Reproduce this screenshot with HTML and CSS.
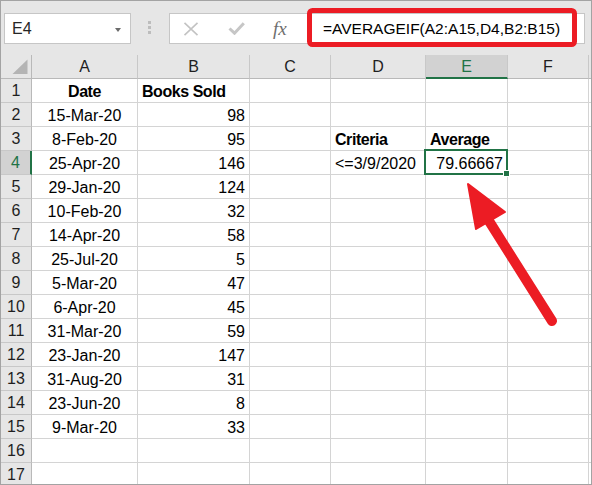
FILE: index.html
```html
<!DOCTYPE html>
<html>
<head>
<meta charset="utf-8">
<link rel="stylesheet" href="styles.css">
</head>
<body>
<div class="frame">
  <div class="toolbar">
    <div class="namebox"><span>E4</span><span class="caret"></span></div>
    <div class="dots"><i></i><i></i><i></i></div>
    <div class="fbox">
      <svg class="ic-x" width="16" height="14" viewBox="0 0 16 14"><path d="M1.5 0.8 L14.5 13.2 M14.5 0.8 L1.5 13.2" stroke="#c3c3c3" stroke-width="1.6" fill="none"/></svg>
      <svg class="ic-ok" width="17" height="13" viewBox="0 0 17 13"><path d="M1.5 6.5 L6.5 11.2 L15.8 1.2" stroke="#c6c6c6" stroke-width="3" fill="none"/></svg>
      <span class="fx">fx</span>
      <span class="formula">=AVERAGEIF(A2:A15,D4,B2:B15)</span>
    </div>
  </div>
  <div class="sheet">
    <div class="ch corner"><svg width="30" height="23" viewBox="0 0 30 23"><polygon points="11.5,19 26.5,19 26.5,4.5" fill="#b4b4b4"/></svg></div>
    <div class="ch">A</div><div class="ch">B</div><div class="ch">C</div><div class="ch">D</div><div class="ch on">E</div><div class="ch">F</div><div class="ch"></div>

    <div class="rh">1</div><div class="c ctr b">Date</div><div class="c b">Books Sold</div><div class="c"></div><div class="c"></div><div class="c"></div><div class="c"></div><div class="c"></div>
    <div class="rh">2</div><div class="c ctr">15-Mar-20</div><div class="c r">98</div><div class="c"></div><div class="c"></div><div class="c"></div><div class="c"></div><div class="c"></div>
    <div class="rh">3</div><div class="c ctr">8-Feb-20</div><div class="c r">95</div><div class="c"></div><div class="c b">Criteria</div><div class="c b">Average</div><div class="c"></div><div class="c"></div>
    <div class="rh on">4</div><div class="c ctr">25-Apr-20</div><div class="c r">146</div><div class="c"></div><div class="c">&lt;=3/9/2020</div><div class="c r sel">79.66667</div><div class="c"></div><div class="c"></div>
    <div class="rh">5</div><div class="c ctr">29-Jan-20</div><div class="c r">124</div><div class="c"></div><div class="c"></div><div class="c"></div><div class="c"></div><div class="c"></div>
    <div class="rh">6</div><div class="c ctr">10-Feb-20</div><div class="c r">32</div><div class="c"></div><div class="c"></div><div class="c"></div><div class="c"></div><div class="c"></div>
    <div class="rh">7</div><div class="c ctr">14-Apr-20</div><div class="c r">58</div><div class="c"></div><div class="c"></div><div class="c"></div><div class="c"></div><div class="c"></div>
    <div class="rh">8</div><div class="c ctr">25-Jul-20</div><div class="c r">5</div><div class="c"></div><div class="c"></div><div class="c"></div><div class="c"></div><div class="c"></div>
    <div class="rh">9</div><div class="c ctr">5-Mar-20</div><div class="c r">47</div><div class="c"></div><div class="c"></div><div class="c"></div><div class="c"></div><div class="c"></div>
    <div class="rh">10</div><div class="c ctr">6-Apr-20</div><div class="c r">45</div><div class="c"></div><div class="c"></div><div class="c"></div><div class="c"></div><div class="c"></div>
    <div class="rh">11</div><div class="c ctr">31-Mar-20</div><div class="c r">59</div><div class="c"></div><div class="c"></div><div class="c"></div><div class="c"></div><div class="c"></div>
    <div class="rh">12</div><div class="c ctr">23-Jan-20</div><div class="c r">147</div><div class="c"></div><div class="c"></div><div class="c"></div><div class="c"></div><div class="c"></div>
    <div class="rh">13</div><div class="c ctr">31-Aug-20</div><div class="c r">31</div><div class="c"></div><div class="c"></div><div class="c"></div><div class="c"></div><div class="c"></div>
    <div class="rh">14</div><div class="c ctr">23-Jun-20</div><div class="c r">8</div><div class="c"></div><div class="c"></div><div class="c"></div><div class="c"></div><div class="c"></div>
    <div class="rh">15</div><div class="c ctr">9-Mar-20</div><div class="c r">33</div><div class="c"></div><div class="c"></div><div class="c"></div><div class="c"></div><div class="c"></div>
    <div class="rh">16</div><div class="c"></div><div class="c"></div><div class="c"></div><div class="c"></div><div class="c"></div><div class="c"></div><div class="c"></div>
    <div class="rh">17</div><div class="c"></div><div class="c"></div><div class="c"></div><div class="c"></div><div class="c"></div><div class="c"></div><div class="c"></div>
  </div>
  <svg class="overlay" width="592" height="485" viewBox="0 0 592 485">
    <rect x="309.5" y="10.5" width="265" height="34" rx="3" fill="none" stroke="#ec1c24" stroke-width="5"/>
    <line x1="489" y1="221" x2="552" y2="321" stroke="#ec1c24" stroke-width="10" stroke-linecap="round"/>
    <polygon points="468,184 505,212 476,229" fill="#ec1c24" stroke="#ec1c24" stroke-width="2" stroke-linejoin="round"/>
  </svg>
</div>
</body>
</html>
```
FILE: styles.css
```css
html, body {
  margin: 0;
  padding: 0;
  background: #ffffff;
}

.frame {
  position: relative;
  width: 592px;
  height: 485px;
  box-sizing: border-box;
  border: 1px solid #a3a3a3;
  background: #e6e6e6;
  overflow: hidden;
  font-family: "Liberation Sans", Arial, sans-serif;
  color: #000;
}

.toolbar {
  height: 54px;
  box-sizing: border-box;
  display: flex;
  align-items: flex-start;
  padding: 12px 0 0 3px;
}

.namebox {
  width: 127px;
  height: 31px;
  box-sizing: border-box;
  background: #fff;
  border: 1px solid #c6c6c6;
  display: flex;
  align-items: center;
  justify-content: space-between;
  padding: 0 9px 0 7px;
  font-size: 16px;
  color: #262626;
}

.caret {
  width: 0;
  height: 0;
  border-left: 3.5px solid transparent;
  border-right: 3.5px solid transparent;
  border-top: 4px solid #6b6b6b;
  margin-top: 2px;
}

.dots {
  display: flex;
  flex-direction: column;
  gap: 2px;
  margin: 8px 0 0 17px;
}

.dots i {
  display: block;
  width: 3px;
  height: 3px;
  background: #bdbdbd;
}

.fbox {
  margin-left: 18px;
  width: 416px;
  height: 31px;
  box-sizing: border-box;
  background: #fff;
  border: 1px solid #c6c6c6;
  display: flex;
  align-items: center;
}

.ic-x {
  display: block;
  margin-left: 13px;
}

.ic-ok {
  display: block;
  margin-left: 29px;
}

.fx {
  display: inline-block;
  width: 16px;
  margin-left: 28px;
  font-family: "Liberation Serif", "Times New Roman", serif;
  font-style: italic;
  font-size: 19px;
  color: #6e6e6e;
  line-height: 20px;
}

.formula {
  margin-left: 34px;
  font-size: 15.5px;
  white-space: nowrap;
  color: #000;
}

.sheet {
  display: grid;
  grid-template-columns: 31px 106px 112px 81px 95px 82px 81px 1fr;
  grid-auto-rows: 24px;
}

.ch {
  box-sizing: border-box;
  border-right: 1px solid #c8c8c8;
  border-bottom: 1px solid #b9b9b9;
  background: #e6e6e6;
  font-size: 16px;
  line-height: 20px;
  padding-top: 2px;
  text-align: center;
  color: #1f1f1f;
}

.ch.corner {
  padding: 0;
  border-right-color: #b9b9b9;
}

.ch.corner svg {
  display: block;
}

.ch.on {
  background: #d2d2d2;
  color: #217346;
  border-bottom: 2px solid #217346;
}

.rh {
  box-sizing: border-box;
  border-right: 1px solid #b9b9b9;
  border-bottom: 1px solid #c8c8c8;
  background: #e6e6e6;
  font-size: 16px;
  line-height: 20px;
  padding-top: 2px;
  text-align: center;
  color: #1f1f1f;
}

.rh.on {
  background: #d2d2d2;
  color: #217346;
  border-right: 2px solid #217346;
}

.c {
  box-sizing: border-box;
  border-right: 1px solid #d4d4d4;
  border-bottom: 1px solid #d4d4d4;
  background: #fff;
  font-size: 16px;
  line-height: 20px;
  padding: 3px 4px 0 4px;
  white-space: nowrap;
  overflow: visible;
}

.c.ctr {
  text-align: center;
}

.c.r {
  text-align: right;
}

.c.b {
  font-weight: bold;
  letter-spacing: -0.45px;
}

.c.sel {
  position: relative;
  z-index: 2;
}

.c.sel::after {
  content: "";
  position: absolute;
  top: -2px;
  left: -2px;
  right: -1px;
  bottom: -1px;
  border: 2px solid #217346;
}

.c.sel::before {
  content: "";
  position: absolute;
  right: -3px;
  bottom: -3px;
  width: 5px;
  height: 5px;
  background: #217346;
  border: 1px solid #fff;
  z-index: 3;
}

.overlay {
  position: absolute;
  top: -1px;
  left: -1px;
  z-index: 5;
  pointer-events: none;
}
```
